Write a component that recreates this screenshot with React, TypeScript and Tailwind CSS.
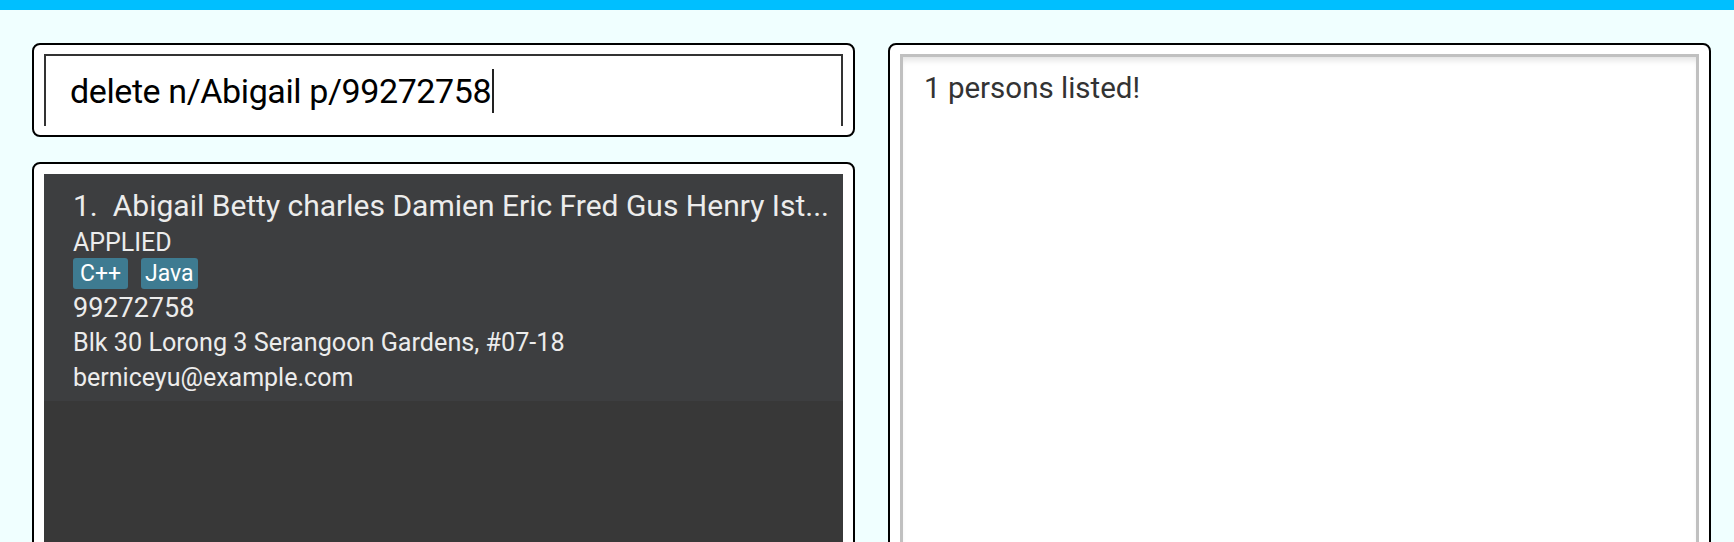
import { ReactNode } from "react";

function Tag({ children, className }: { children: ReactNode; className?: string }) {
  return (
    <span
      className={`h-[31px] rounded-[3px] bg-[#3e7b91] text-[23px] leading-[31px] text-white ${className ?? ""}`}
    >
      {children}
    </span>
  );
}

export default function App() {
  return (
    <div className="h-[542px] overflow-hidden bg-[#f0ffff] font-[Roboto,sans-serif]">
      {/* top bar */}
      <div className="h-[10px] bg-[#00bfff]" />

      <div className="grid grid-cols-2 gap-[33px] pl-[32px] pr-[23px] pt-[33px]">
        {/* left column */}
        <div>
          {/* command box */}
          <div className="rounded-[8px] border-2 border-black bg-white px-[10px] py-[9px]">
            <div className="flex h-[72px] items-center border-x-2 border-t-2 border-[#333] pl-[24px]">
              <span className="text-[34px] leading-none tracking-[-0.4px] text-black">
                delete n/Abigail p/99272758
              </span>
              <span className="ml-px h-[44px] w-[2px] bg-[#222]" />
            </div>
          </div>

          {/* person list */}
          <div className="mt-[25px] rounded-[8px] border-2 border-black bg-white px-[10px] pt-[10px]">
            <div className="h-[420px] bg-[#383838]">
              <div className="h-[227px] bg-[#3d3e40] pl-[29px] pt-[11px] text-[#ececec]">
                <div className="flex text-[30px] leading-[42px]">
                  <span className="mr-[15px]">1.</span>
                  <span>Abigail Betty charles Damien Eric Fred Gus Henry Ist...</span>
                </div>
                <div className="text-[25px] leading-[31px]">APPLIED</div>
                <div className="flex h-[31px] gap-[13px]">
                  <Tag className="px-[7px]">C++</Tag>
                  <Tag className="px-[4px]">Java</Tag>
                </div>
                <div className="text-[27px] leading-[38px]">99272758</div>
                <div className="text-[25.2px] leading-[31px]">
                  Blk 30 Lorong 3 Serangoon Gardens, #07-18
                </div>
                <div className="text-[25px] leading-[39px]">berniceyu@example.com</div>
              </div>
            </div>
          </div>
        </div>

        {/* right column: result display */}
        <div className="h-[540px] rounded-[8px] border-2 border-black bg-white px-[10px] pt-[9px]">
          <div className="h-full border-x-[3px] border-t-[3px] border-[#c0c0c0] bg-white pl-[21px] pt-[17px] shadow-[inset_0_6px_6px_-3px_rgba(0,0,0,0.12)]">
            <div className="text-[29.5px] leading-none text-[#333]">1 persons listed!</div>
          </div>
        </div>
      </div>
    </div>
  );
}
